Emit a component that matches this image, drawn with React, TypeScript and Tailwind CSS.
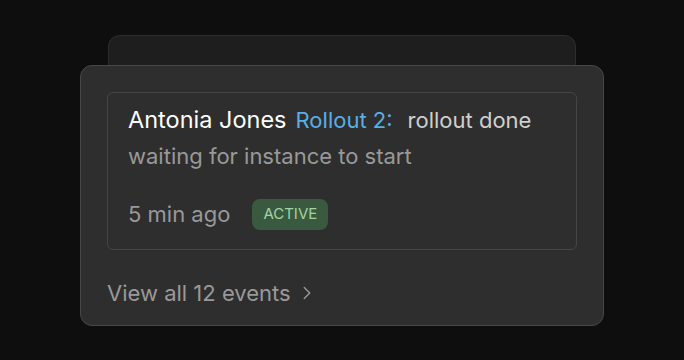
import { ChevronRight } from "lucide-react";

const App = () => {
  return (
    <div className="w-[684px] h-[360px] bg-[#0e0e0e] flex justify-center pt-[35px] font-['Inter',sans-serif]">
      <div className="w-[524px] flex flex-col">
        <div className="mx-[28px] h-[42px] rounded-t-xl border border-b-0 border-[#2c2c2c] bg-[#1e1e1e]" />
        <div className="relative -mt-[12px] h-[261px] rounded-xl border border-[#474747] bg-[#2e2e2e] px-[26px] pt-[26px]">
          <div className="rounded-md border border-[#454545] px-[20px] pt-[9px] pb-[18px]">
            <div className="flex items-baseline text-[22px] leading-[36px]">
              <span className="text-[23.5px] text-white">Antonia Jones</span>
              <span className="ml-[9px] text-[#5aade6]">Rollout 2:</span>
              <span className="ml-[15px] text-[#cfcfcf]">rollout done</span>
            </div>
            <div className="text-[22px] leading-[36px] text-[#999999]">waiting for instance to start</div>
            <div className="mt-[24px] flex items-center">
              <span className="text-[22px] text-[#999999]">5 min ago</span>
              <span className="ml-[22px] rounded-lg bg-[#3a5a3f] px-[11px] h-[31px] flex items-center text-[15px] text-[#a3d3a4]">ACTIVE</span>
            </div>
          </div>
          <div className="mt-[28px] flex items-center text-[22px] leading-[30px] text-[#999999]">
            <span>View all 12 events</span>
            <ChevronRight className="ml-[5px] w-[22px] h-[22px]" strokeWidth={1.5} />
          </div>
        </div>
      </div>
    </div>
  );
};

export default App;
